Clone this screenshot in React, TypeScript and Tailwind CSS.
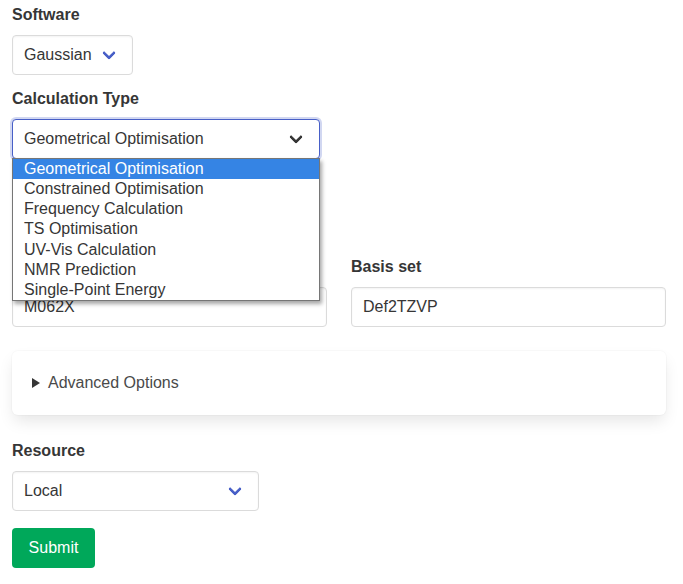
import React from "react";

const Arrow = ({ color }: { color: string }) => (
  <span
    className={`pointer-events-none absolute right-[18px] top-1/2 mt-[-7px] block h-[10px] w-[10px] -rotate-45 rounded-[2px] border-b-[3px] border-l-[3px] border-r-0 border-t-0 ${color}`}
  />
);

const Label = ({ children }: { children?: React.ReactNode }) => (
  <div className="mb-2 h-6 text-base font-bold leading-6 text-[#363636]">{children}</div>
);

const options = [
  "Geometrical Optimisation",
  "Constrained Optimisation",
  "Frequency Calculation",
  "TS Optimisation",
  "UV-Vis Calculation",
  "NMR Prediction",
  "Single-Point Energy",
];

export default function App() {
  return (
    <div
      className="min-h-[584px] w-[683px] bg-white pl-3 pr-[17px] pt-[3px] text-[#4a4a4a]"
      style={{ fontFamily: '"Liberation Sans", Arial, sans-serif' }}
    >
      <div className="relative">
        {/* Software */}
        <div className="mb-3">
          <Label>Software</Label>
          <div className="relative inline-block h-10 rounded border border-[#dbdbdb] bg-white pl-[11px] pr-10 text-base leading-[38px] text-[#363636] shadow-[inset_0_1px_2px_rgba(10,10,10,0.05)]">
            Gaussian
            <Arrow color="border-[#485fc7]" />
          </div>
        </div>

        {/* Calculation type */}
        <div className="mb-3">
          <Label>Calculation Type</Label>
          <div className="relative w-[308px]">
            <div className="relative h-10 rounded border border-[#485fc7] bg-white pl-[11px] pr-10 text-base leading-[38px] text-[#363636] shadow-[0_0_0_2px_rgba(72,95,199,0.25)]">
              Geometrical Optimisation
              <Arrow color="border-[#363636]" />
            </div>
            <div className="absolute left-0 top-[39px] z-10 w-[308px] border border-[#767676] bg-white shadow-[2px_3px_4px_rgba(0,0,0,0.35)]">
              {options.map((o, i) => (
                <div
                  key={o}
                  className={`h-[20.15px] pl-[11px] text-base leading-[20.15px] ${
                    i === 0 ? "bg-[#3584e4] text-white" : "text-[#363636]"
                  }`}
                >
                  {o}
                </div>
              ))}
            </div>
          </div>
        </div>

        {/* hidden field under dropdown */}
        <div className="mb-3 h-[72px]" />

        {/* Columns */}
        <div className="grid grid-cols-2 gap-6">
          <div>
            <Label />
            <input
              readOnly
              value="M062X"
              className="h-10 w-full rounded border border-[#dbdbdb] bg-white px-[11px] text-base text-[#363636] shadow-[inset_0_1px_2px_rgba(10,10,10,0.05)] outline-none"
            />
          </div>
          <div>
            <Label>Basis set</Label>
            <input
              readOnly
              value="Def2TZVP"
              className="h-10 w-full rounded border border-[#dbdbdb] bg-white px-[11px] text-base text-[#363636] shadow-[inset_0_1px_2px_rgba(10,10,10,0.05)] outline-none"
            />
          </div>
        </div>

        {/* Advanced options */}
        <div className="mb-6 mt-6 rounded-md bg-white p-5 shadow-[0_8px_16px_-2px_rgba(10,10,10,0.1),0_0_0_1px_rgba(10,10,10,0.02)]">
          <div className="flex h-6 items-center text-base leading-6 text-[#4a4a4a]">
            <svg width="8" height="10" viewBox="0 0 8 10" className="mr-2 shrink-0">
              <path d="M0 0 L8 5 L0 10 Z" fill="#363636" />
            </svg>
            Advanced Options
          </div>
        </div>

        {/* Resource */}
        <div className="mb-[17px]">
          <Label>Resource</Label>
          <div className="relative h-10 w-[247px] rounded border border-[#dbdbdb] bg-white pl-[11px] pr-10 text-base leading-[38px] text-[#363636] shadow-[inset_0_1px_2px_rgba(10,10,10,0.05)]">
            Local
            <Arrow color="border-[#485fc7]" />
          </div>
        </div>

        <button className="h-10 w-[83px] rounded bg-[#00a85a] text-base leading-10 text-white">
          Submit
        </button>
      </div>
    </div>
  );
}
